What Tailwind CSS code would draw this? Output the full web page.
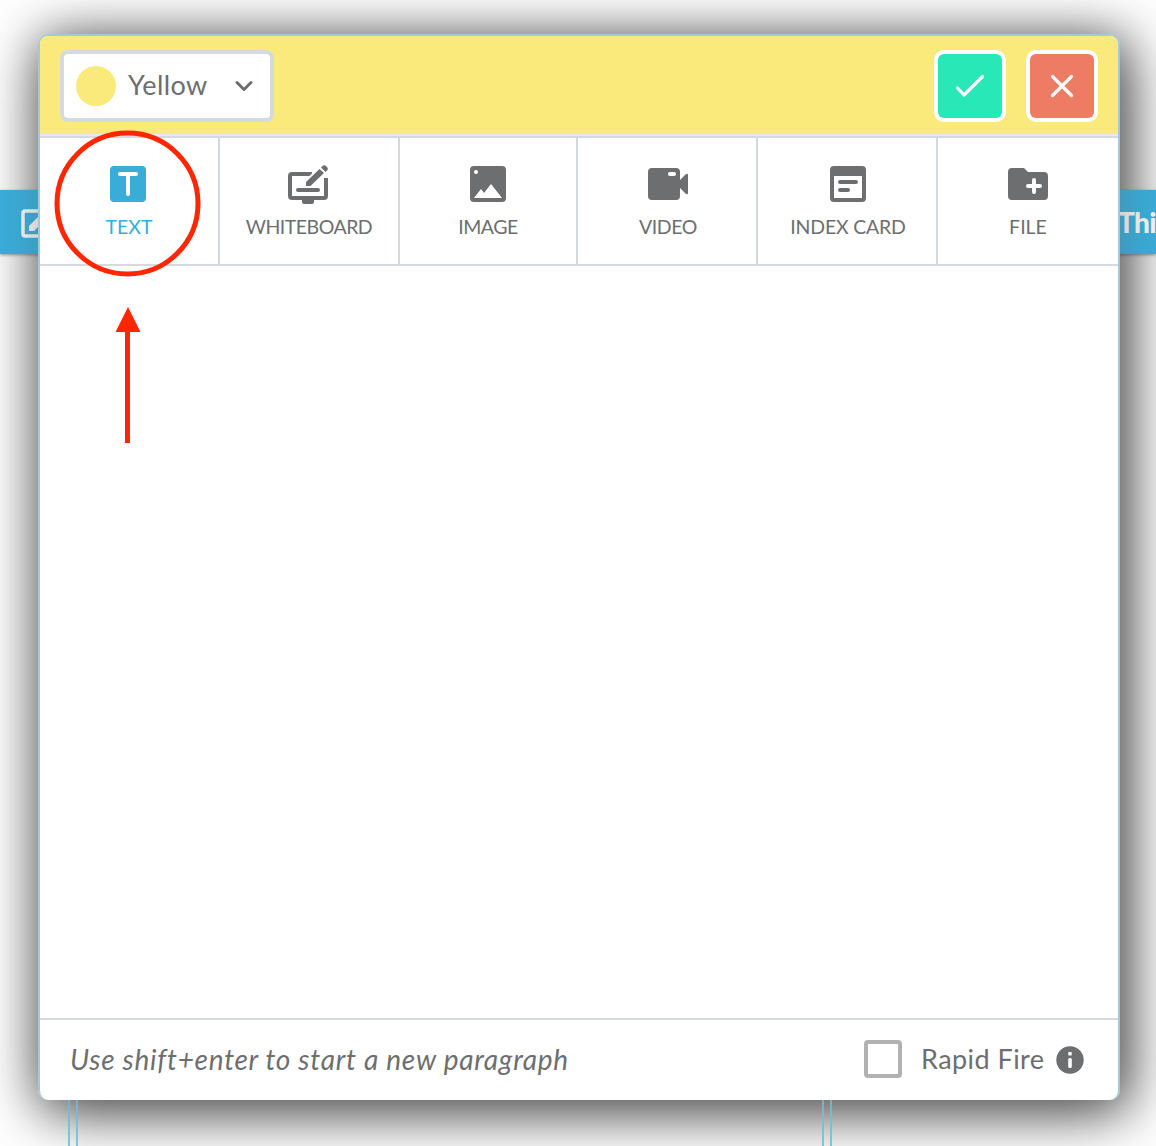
<!DOCTYPE html>
<html lang="en">
<head>
<meta charset="utf-8">
<title>Add idea</title>
<script src="https://cdn.jsdelivr.net/npm/@tailwindcss/browser@4"></script>
</head>
<body class="relative h-[1146px] w-[1156px] overflow-hidden bg-white font-['Lato',sans-serif] text-[#6d6e70]">
  <!-- Board behind the dialog -->
  <div class="absolute left-[38px] top-[34px] h-[1066px] w-[1082px] rounded-[10px] bg-white shadow-[6px_10px_60px_rgba(0,0,0,0.77)]"></div>
  <div class="absolute inset-x-0 top-[190px] flex h-16 items-center justify-between bg-[#39acd8] shadow-[0_1px_3px_rgba(0,0,0,0.4)]">
    <svg class="ml-5 mt-1 h-9 w-9" viewBox="0 0 36 36" fill="none" stroke="#f2f2f2" stroke-width="3.500" stroke-linecap="round" stroke-linejoin="round"><path d="M20 5H5a2 2 0 0 0-2 2v21a2 2 0 0 0 2 2h22a2 2 0 0 0 2-2V18"/><path d="M9 25v-5L25 4l5 5-16 16z" fill="#f2f2f2" stroke="none"/></svg>
    <span class="w-[38px] whitespace-nowrap text-[28px] font-black leading-none tracking-[-0.6px] text-[#f2f2f2]">Thi</span>
  </div>
  <div class="absolute left-[68px] top-[1090px] flex h-14 w-[764px] justify-between">
    <div class="w-2.5 border-x-2 border-[#7cc6e0]"></div>
    <div class="w-2.5 border-x-2 border-[#7cc6e0]"></div>
  </div>

  <!-- Dialog -->
  <main class="absolute left-[38px] top-[34px] flex h-[1066px] w-[1082px] flex-col overflow-hidden rounded-[10px] border-2 border-b-0 border-[#a3c9d8] bg-white shadow-[2px_2px_40px_rgba(90,90,90,0.4)]">
    <header class="flex h-[98px] shrink-0 items-start bg-[#fae97b] px-5 pt-3.5">
      <button class="flex h-[72px] w-[214px] items-center rounded-lg border-4 border-[#d5dadf] bg-white pl-3">
        <span class="size-10 rounded-full bg-[#fae97b]"></span>
        <span class="ml-3 w-[106px] -translate-y-px text-left text-[27px] leading-8 tracking-[0.4px]">Yellow</span>
        <svg class="size-5" viewBox="0 0 20 20" fill="none" stroke="#6d6e70" stroke-width="3" stroke-linecap="round" stroke-linejoin="round"><path d="M3 6.500l7 7 7-7"/></svg>
      </button>
      <button class="ml-auto flex size-[72px] items-center justify-center rounded-[10px] border-4 border-white bg-white"><span class="flex size-16 items-center justify-center rounded-md bg-[#28e8b8]"><svg class="size-8" viewBox="0 0 32 32" fill="none" stroke="#fff" stroke-width="3.200" stroke-linecap="round" stroke-linejoin="round"><path d="M3.500 18l6.500 7L28.500 6.500"/></svg></span></button>
      <button class="ml-5 flex size-[72px] items-center justify-center rounded-[10px] border-4 border-white bg-white"><span class="flex size-16 items-center justify-center rounded-md bg-[#ee7b64]"><svg class="size-8" viewBox="0 0 32 32" fill="none" stroke="#fff" stroke-width="3.200" stroke-linecap="round"><path d="M6.500 6.500l19 19M25.500 6.500l-19 19"/></svg></span></button>
    </header>
    <nav class="grid h-[132px] shrink-0 grid-cols-[180px_180px_178px_180px_180px_180px] border-t-2 border-[#e6e9ed]">
      <button class="flex flex-col items-center border-y-2 border-r-2 border-[#d5dadf] pt-[26px] text-[#39acd8]">
        <svg class="-ml-0.5 size-10" viewBox="0 0 40 40"><rect x="2" y="2" width="36" height="36" rx="4" fill="currentColor"/><path d="M12 10h16M20 10v20" fill="none" stroke="#fff" stroke-width="4" stroke-linecap="round"/></svg>
        <span class="mt-[11px] text-[19.500px] leading-6">TEXT</span>
      </button>
      <button class="flex flex-col items-center border-y-2 border-r-2 border-[#d5dadf] pt-[26px] text-[#6d6e70]">
        <svg class="-ml-0.5 size-10" viewBox="0 0 40 40"><path d="M24 10H4a2 2 0 0 0-2 2v20a2 2 0 0 0 2 2h32a2 2 0 0 0 2-2V14" fill="none" stroke="currentColor" stroke-width="4"/><path d="M14 35h12v3a2 2 0 0 1-2 2h-8a2 2 0 0 1-2-2z" fill="currentColor"/><path d="M10 26h20" stroke="currentColor" stroke-width="4" stroke-linecap="round"/><path d="M17 22.500v-6L34.500-1 42 6 24 22.500z" fill="#fff"/><path d="M18 22v-4L31.500 5l4.500 4-13.500 13zM33 3.500l1.500-1.500a2.500 2.500 0 0 1 3.500 0l1 1a2.500 2.500 0 0 1 0 3.500L37.500 8z" fill="currentColor"/></svg>
        <span class="mt-[11px] text-[19.500px] leading-6 tracking-[-0.5px]">WHITEBOARD</span>
      </button>
      <button class="flex flex-col items-center border-y-2 border-r-2 border-[#d5dadf] pt-[26px] text-[#6d6e70]">
        <svg class="size-10" viewBox="0 0 40 40"><rect x="2" y="2" width="36" height="36" rx="4" fill="currentColor"/><circle cx="8" cy="8" r="2" fill="#fff"/><path d="M6 34l7-9 3 4 7-9 11 14z" fill="#fff"/></svg>
        <span class="mt-[11px] text-[19.500px] leading-6 tracking-[-0.5px]">IMAGE</span>
      </button>
      <button class="flex flex-col items-center border-y-2 border-r-2 border-[#d5dadf] pl-0.5 pt-[26px] text-[#6d6e70]">
        <svg class="size-10" viewBox="0 0 40 40"><rect y="4" width="32" height="32" rx="4" fill="currentColor"/><path d="M32 16l6-6q2-1 2 1v18q0 2-2 1l-6-6z" fill="currentColor"/><rect x="20" y="8" width="8" height="4" rx="2" fill="#fff"/></svg>
        <span class="mt-[11px] text-[19.500px] leading-6 tracking-[-0.4px]">VIDEO</span>
      </button>
      <button class="flex flex-col items-center border-y-2 border-r-2 border-[#d5dadf] pl-0.5 pt-[26px] text-[#6d6e70]">
        <svg class="size-10" viewBox="0 0 40 40"><rect x="2" y="2" width="36" height="36" rx="4" fill="currentColor"/><path d="M6 12h28v22H6z" fill="#fff"/><path d="M12 18h16M12 26h8" stroke="currentColor" stroke-width="4" stroke-linecap="round"/></svg>
        <span class="mt-[11px] text-[19.500px] leading-6 tracking-[-0.2px]">INDEX CARD</span>
      </button>
      <button class="flex flex-col items-center border-y-2 border-[#d5dadf] pt-[26px] text-[#6d6e70]">
        <svg class="size-10" viewBox="0 0 40 40"><path d="M4 4h12l4 4h16a4 4 0 0 1 4 4v20a4 4 0 0 1-4 4H4a4 4 0 0 1-4-4V8a4 4 0 0 1 4-4z" fill="currentColor"/><path d="M20 22h12M26 16v12" stroke="#fff" stroke-width="4" stroke-linecap="round"/></svg>
        <span class="mt-[11px] text-[19.500px] leading-6">FILE</span>
      </button>
    </nav>
    <section class="flex-1"></section>
    <footer class="flex h-[82px] shrink-0 items-center border-t-2 border-[#d5dadf] pl-[30px] pr-[34px] text-[27px] leading-8">
      <span class="-translate-y-px whitespace-nowrap text-[28px] italic tracking-[0.730px]">Use shift+enter to start a new paragraph</span>
      <span class="ml-auto size-[38px] -translate-y-px rounded border-4 border-[#b2b2b2]"></span>
      <span class="ml-[19px] w-[123px] -translate-y-px whitespace-nowrap tracking-[0.450px]">Rapid Fire</span>
      <svg class="ml-3 size-7" viewBox="0 0 28 28"><circle cx="14" cy="14" r="13.700" fill="#6d6e70"/><rect x="12.200" y="6" width="3.600" height="3.600" rx="1" fill="#fff"/><rect x="12.200" y="12" width="3.600" height="10" rx="1.500" fill="#fff"/></svg>
    </footer>
  </main>

  <!-- Callout over the first tab -->
  <svg class="absolute left-[50px] top-[126px] h-[320px] w-[156px]" viewBox="0 0 156 320"><circle cx="77.500" cy="77.500" r="70.500" fill="none" stroke="#ff2600" stroke-width="5"/><path d="M75 204h5v113h-5zM78 181l12.500 25h-25z" fill="#ff2600"/></svg>
</body>
</html>
